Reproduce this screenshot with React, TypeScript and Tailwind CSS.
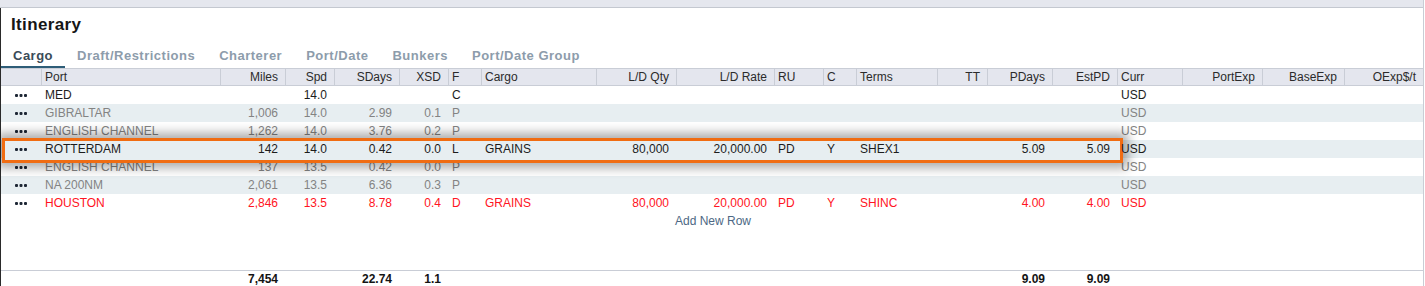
import React from "react";

type Col = { w: string; align: "l" | "r" | "c"; label: string };

const cols: Col[] = [
  { w: "w-[40px]", align: "c", label: "" },
  { w: "w-[179px]", align: "l", label: "Port" },
  { w: "w-[65px]", align: "r", label: "Miles" },
  { w: "w-[49px]", align: "r", label: "Spd" },
  { w: "w-[65px]", align: "r", label: "SDays" },
  { w: "w-[49px]", align: "r", label: "XSD" },
  { w: "w-[33px]", align: "l", label: "F" },
  { w: "w-[115px]", align: "l", label: "Cargo" },
  { w: "w-[80px]", align: "r", label: "L/D Qty" },
  { w: "w-[98px]", align: "r", label: "L/D Rate" },
  { w: "w-[49px]", align: "l", label: "RU" },
  { w: "w-[33px]", align: "l", label: "C" },
  { w: "w-[81px]", align: "l", label: "Terms" },
  { w: "w-[50px]", align: "r", label: "TT" },
  { w: "w-[65px]", align: "r", label: "PDays" },
  { w: "w-[65px]", align: "r", label: "EstPD" },
  { w: "w-[65px]", align: "l", label: "Curr" },
  { w: "w-[80px]", align: "r", label: "PortExp" },
  { w: "w-[82px]", align: "r", label: "BaseExp" },
  { w: "w-[79px]", align: "r", label: "OExp$/t" },
];

type Row = { cells: string[]; tone: "black" | "gray" | "red"; selected?: boolean };

const e = "";
const rows: Row[] = [
  { tone: "black", cells: ["MED", e, "14.0", e, e, "C", e, e, e, e, e, e, e, e, e, "USD", e, e, e] },
  { tone: "gray", cells: ["GIBRALTAR", "1,006", "14.0", "2.99", "0.1", "P", e, e, e, e, e, e, e, e, e, "USD", e, e, e] },
  { tone: "gray", cells: ["ENGLISH CHANNEL", "1,262", "14.0", "3.76", "0.2", "P", e, e, e, e, e, e, e, e, e, "USD", e, e, e] },
  {
    tone: "black",
    selected: true,
    cells: ["ROTTERDAM", "142", "14.0", "0.42", "0.0", "L", "GRAINS", "80,000", "20,000.00", "PD", "Y", "SHEX1", e, "5.09", "5.09", "USD", e, e, e],
  },
  { tone: "gray", cells: ["ENGLISH CHANNEL", "137", "13.5", "0.42", "0.0", "P", e, e, e, e, e, e, e, e, e, "USD", e, e, e] },
  { tone: "gray", cells: ["NA 200NM", "2,061", "13.5", "6.36", "0.3", "P", e, e, e, e, e, e, e, e, e, "USD", e, e, e] },
  {
    tone: "red",
    cells: ["HOUSTON", "2,846", "13.5", "8.78", "0.4", "D", "GRAINS", "80,000", "20,000.00", "PD", "Y", "SHINC", e, "4.00", "4.00", "USD", e, e, e],
  },
];

const totals = [e, "7,454", e, "22.74", "1.1", e, e, e, e, e, e, e, e, "9.09", "9.09", e, e, e, e];

const toneClass = {
  black: "text-[#1c1c1c]",
  gray: "text-[#838383]",
  red: "text-[#ff1423]",
};

function Dots() {
  return (
    <svg width="12" height="3" viewBox="0 0 12 3" className="inline-block">
      <rect x="0" y="0" width="3" height="3" rx="1" fill="#1d2634" />
      <rect x="4.5" y="0" width="3" height="3" rx="1" fill="#1d2634" />
      <rect x="9" y="0" width="3" height="3" rx="1" fill="#1d2634" />
    </svg>
  );
}

function alignClass(a: "l" | "r" | "c") {
  if (a === "l") return "text-left pl-[4px]";
  if (a === "r") return "text-right pr-[7px]";
  return "text-center";
}

export default function App() {
  const tabs = ["Cargo", "Draft/Restrictions", "Charterer", "Port/Date", "Bunkers", "Port/Date Group"];
  return (
    <div className="w-[1424px] h-[286px] overflow-hidden bg-white border-r border-[#c9cdd5] font-['Liberation_Sans',Arial,sans-serif]">
      <div className="h-[8px] bg-[#e5e7ee] border-b border-[#c4c8d0]" />
      <div className="h-[278px] border-l border-[#2a2a2a] flex flex-col">
        <div className="h-[40px] shrink-0 pl-[10px] pt-[7px] text-[17px] leading-[20px] font-bold tracking-[0.35px] text-[#161616]">
          Itinerary
        </div>
        <div className="flex h-[20px] shrink-0">
          {tabs.map((t, i) => (
            <div
              key={t}
              className={
                i === 0
                  ? "px-[12px] text-[13px] leading-[16px] font-bold tracking-[0.5px] text-[#3a4b58] border-b-2 border-[#2e5d78]"
                  : "px-[12px] text-[13px] leading-[16px] font-bold tracking-[0.5px] text-[#8d9cab] border-b-2 border-transparent"
              }
            >
              {t}
            </div>
          ))}
        </div>
        <div className="flex h-[18px] shrink-0 bg-[#e4e6ee] border-t border-b border-[#c9cdd6] text-[12px] leading-[16px] text-[#2b2b2b]">
          {cols.map((c, i) => (
            <div
              key={i}
              className={`${c.w} shrink-0 whitespace-nowrap overflow-hidden ${i > 0 ? "border-l border-[#c9cdd6]" : ""} ${
                c.align === "l" ? "text-left pl-[3px]" : c.align === "r" ? "text-right pr-[7px]" : "text-center"
              }`}
            >
              {c.label}
            </div>
          ))}
        </div>
        {rows.map((r, ri) => (
          <div
            key={ri}
            className={`relative flex h-[18px] shrink-0 text-[12px] leading-[18px] ${toneClass[r.tone]} ${
              ri % 2 === 1 ? "bg-[#e7eef1]" : "bg-white"
            } ${r.selected ? "z-10" : ""}`}
          >
            {r.selected && (
              <div className="absolute left-[1px] top-[-2px] w-[1121px] h-[25px] border-[3px] border-[#f06c12] bg-[#e7eef1] shadow-[0_0_10px_5px_rgba(0,0,0,0.33)] -z-10" />
            )}
            <div className={`${cols[0].w} shrink-0 flex items-center justify-center`}>
              <Dots />
            </div>
            {r.cells.map((v, ci) => {
              const c = cols[ci + 1];
              return (
                <div key={ci} className={`${c.w} shrink-0 whitespace-nowrap overflow-hidden ${alignClass(c.align)}`}>
                  {v}
                </div>
              );
            })}
          </div>
        ))}
        <div className="h-[18px] shrink-0 text-[12px] leading-[18px] text-[#4d6884] flex">
          <div className="w-[674px] shrink-0" />
          <div>Add New Row</div>
        </div>
        <div className="h-[40px] shrink-0" />
        <div className="flex h-[18px] shrink-0 border-t border-[#c9cdd6] text-[12px] leading-[17px] font-bold text-[#141414]">
          <div className={`${cols[0].w} shrink-0`} />
          {totals.map((v, ci) => {
            const c = cols[ci + 1];
            return (
              <div key={ci} className={`${c.w} shrink-0 whitespace-nowrap overflow-hidden ${alignClass(c.align)}`}>
                {v}
              </div>
            );
          })}
        </div>
      </div>
    </div>
  );
}
